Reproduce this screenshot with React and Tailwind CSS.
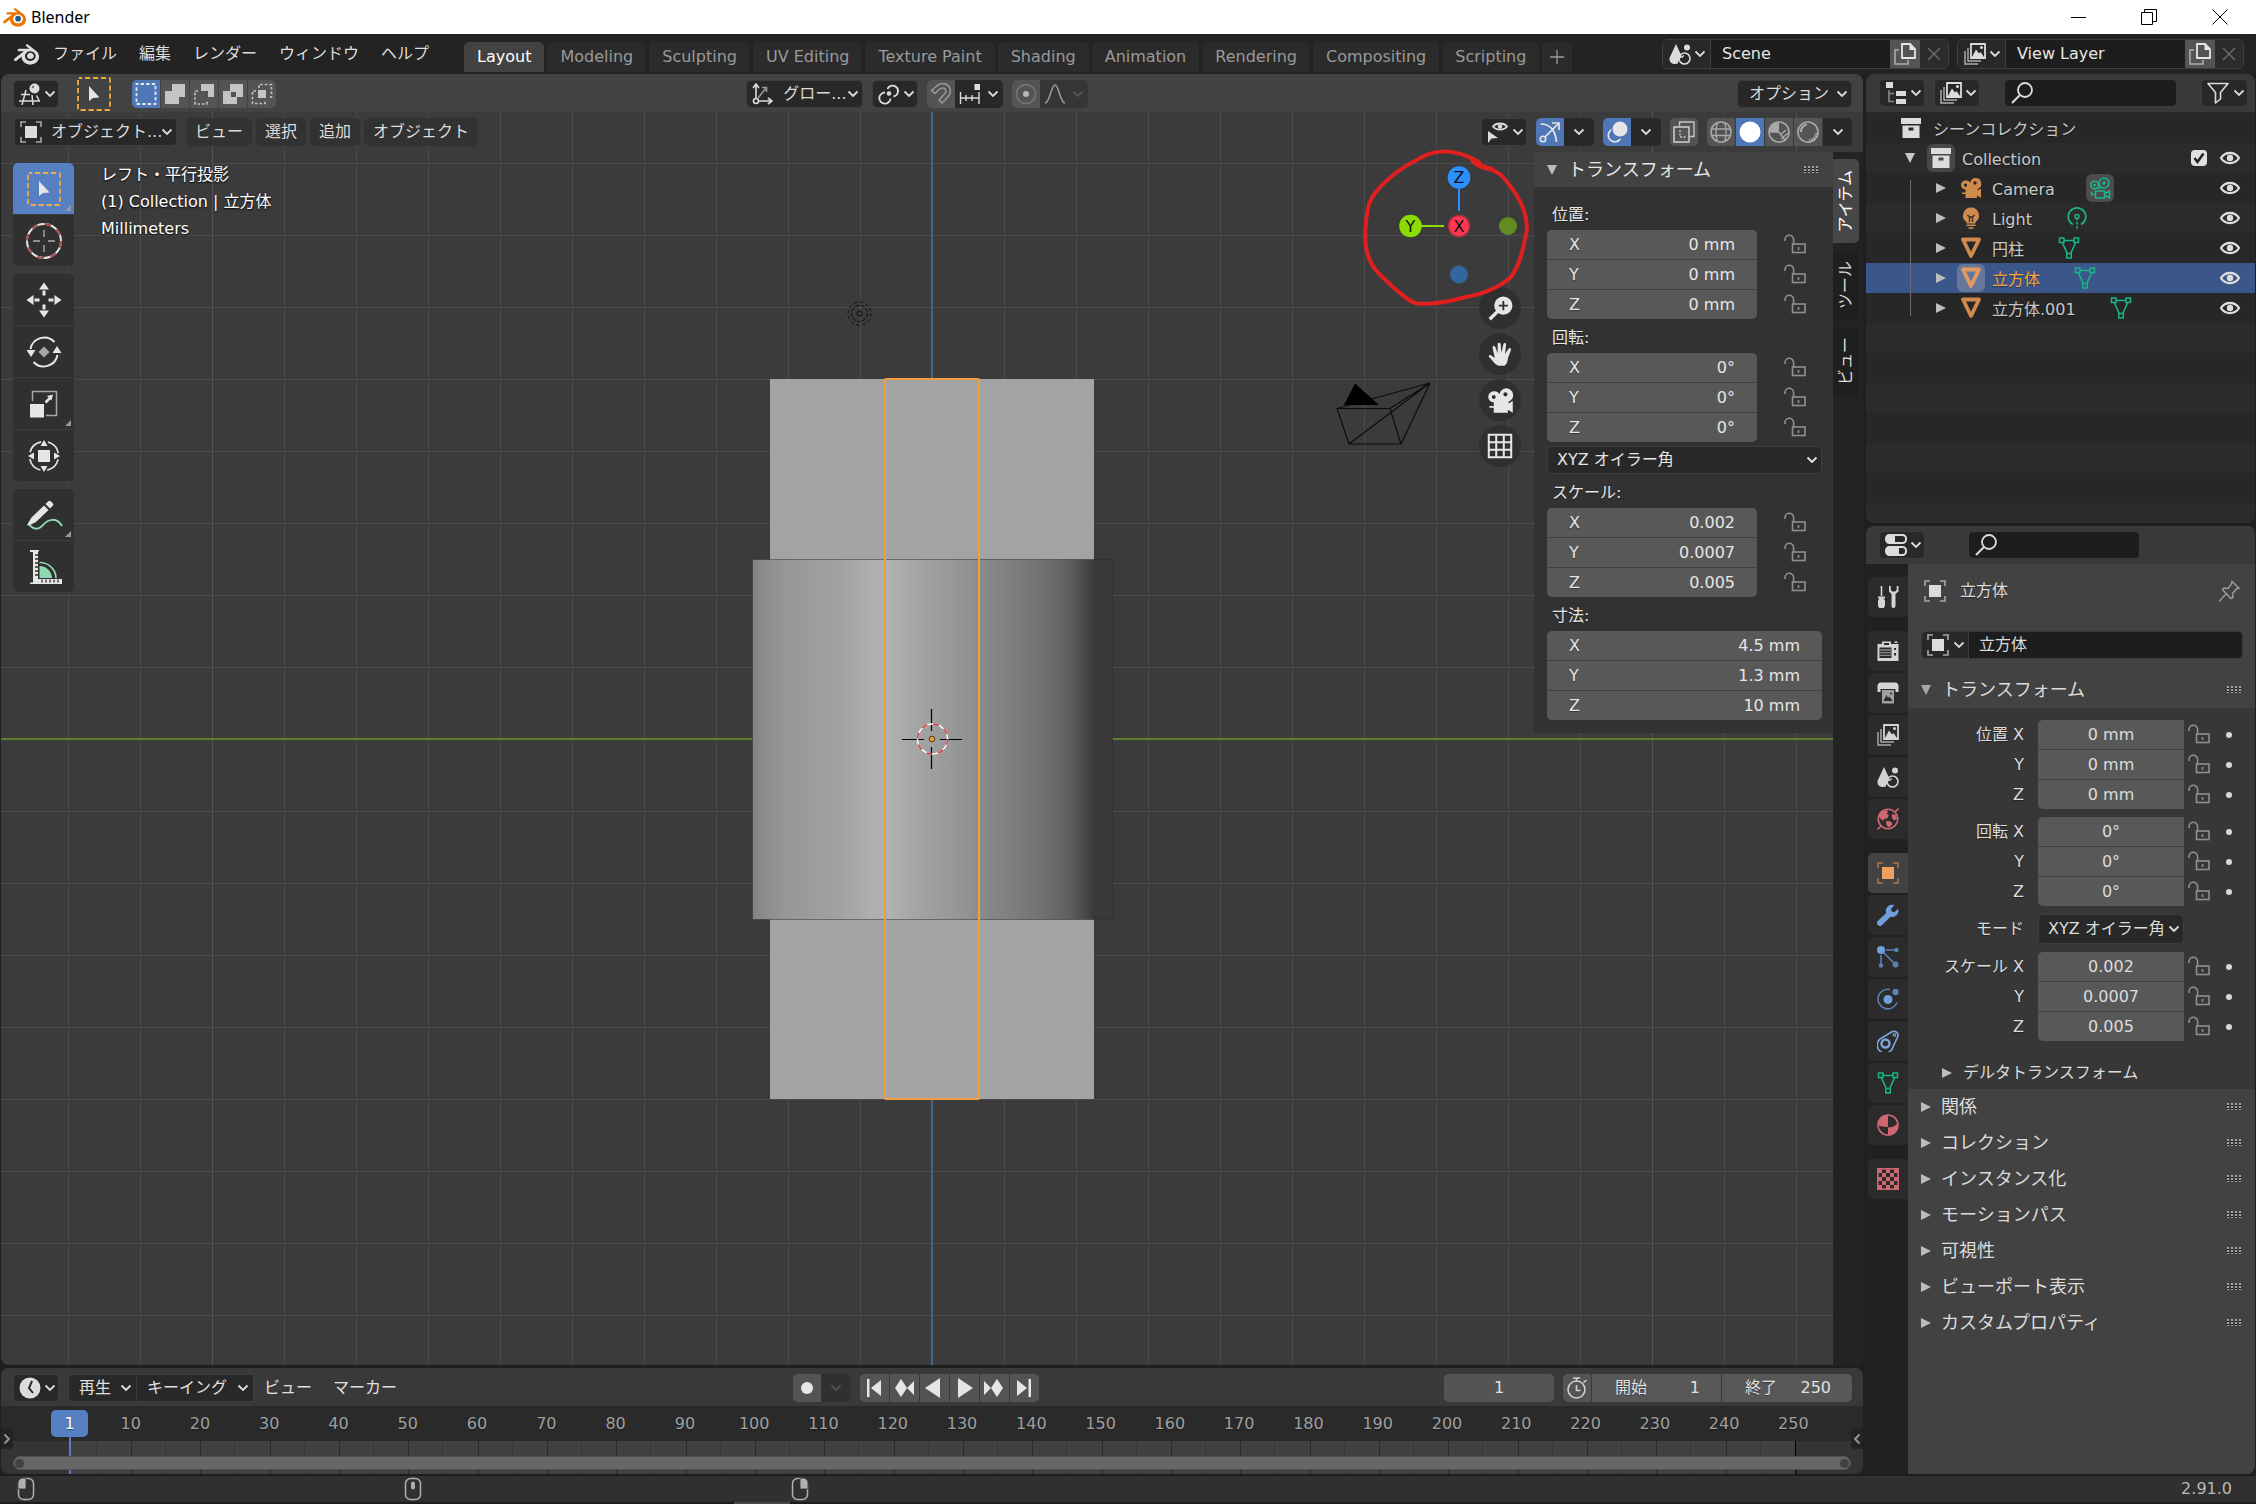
import { SiBlender } from 'react-icons/si'

const FONT = "font-['DejaVu_Sans','Noto_Sans_CJK_JP',sans-serif]"

// Every icon is drawn on a 22x22 board
function Icon({ children, className = '', size = 22 }) {
  return (
    <svg
      viewBox="0 0 22 22"
      width={size}
      height={size}
      fill="none"
      stroke="currentColor"
      strokeWidth="1.6"
      className={`shrink-0 ${className}`}
      aria-hidden="true"
    >
      {children}
    </svg>
  )
}

const solid = { fill: 'currentColor', stroke: 'none' }

function Chevron({ className = '' }) {
  return (
    <svg viewBox="0 0 12 8" width="12" height="8" fill="none" stroke="currentColor" strokeWidth="1.8" className={`shrink-0 ${className}`} aria-hidden="true">
      <path d="M1.5 1.5 6 6l4.5-4.5" />
    </svg>
  )
}

const Editor3D = () => (
  <Icon>
    <circle cx="15.5" cy="5.5" r="5" {...solid} />
    <circle cx="14" cy="4" r="1.2" fill="#777" stroke="none" />
    <path d="M2 11.5h9M0 18h21M7 7 3 22M13 12l1 10M17.5 12.5l2.5 5" strokeWidth="1.5" />
  </Icon>
)
const CursorArrow = <path d="M0 0v15l4-3 6.5-.5z" />
const SelectBox = ({ size = 34 }) => (
  <svg viewBox="0 0 34 34" width={size} height={size} fill="none" aria-hidden="true">
    <rect x="1" y="1" width="32" height="32" rx="1" stroke="#f2a93b" strokeWidth="1.8" strokeDasharray="5.2 2.8" strokeDashoffset="2" />
    <g transform="translate(12 9)" fill="#e6e6e6">{CursorArrow}</g>
  </svg>
)
const SelSet = () => <Icon><rect x="1.5" y="1" width="19" height="20" strokeDasharray="3.4 2.2" strokeDashoffset="1.5" strokeWidth="1.8" /></Icon>
const SelExtend = () => <Icon className="text-[#c4c4c4]"><path d="M8 1h13v13h-6v7H1V8h7z" {...solid} /></Icon>
const SelSubtract = () => (
  <Icon className="text-[#c4c4c4]">
    <path d="M8 1h13v13h-6V8H8z" {...solid} />
    <path d="M5 8H2v13h12v-4" strokeDasharray="2.6 2" />
  </Icon>
)
const SelInvert = () => (
  <Icon className="text-[#c4c4c4]">
    <path fillRule="evenodd" d="M8 1h13v13h-6v7H1V8h7zM9 9v5h5V9z" {...solid} />
  </Icon>
)
const SelIntersect = () => (
  <Icon className="text-[#c4c4c4]">
    <path d="M7 7h8v8H7z" {...solid} />
    <path d="M8 5V1.500h12.500V14H17M5 8H1.500v12.500H14V17" strokeDasharray="2.600 2" />
  </Icon>
)
const Orientation = () => (
  <Icon>
    <path d="M5 2v16h15M2 5l3-4 3 4M17 15l4 3-4 3" />
    <path d="M7 15 15 5M11 4.500h4.500V9" stroke="#999" />
    <circle cx="5" cy="18" r="2.500" fill="#282828" />
  </Icon>
)
const Pivot = () => (
  <Icon>
    <path d="M9.500 6a5.500 5.500 0 1 1 6 7.500M12.500 15.500A5.600 5.600 0 1 1 7 9.500" strokeWidth="1.800" />
    <circle cx="11" cy="10.500" r="2.300" {...solid} />
  </Icon>
)
const Magnet = () => (
  <Icon className="text-[#9a9a9a]">
    <path d="M1.500 7.500 5.500 4c5-5 11-4 13.500-.500 2.500 4 1.500 8-2 11.500l-5 5-3-3 5-5.500c2-2 2.500-4 1-5.500-1.500-1.500-4-1-6 .500L5 10.500z" strokeWidth="1.500" />
  </Icon>
)
const SnapGrid = () => (
  <Icon>
    <path d="M1 15h19M1.500 9v12M7 12v6M13 12v6M20 9v12" strokeWidth="1.400" />
    <path d="M15.500 1H21v6h-5.500z" {...solid} />
  </Icon>
)
const Proportional = () => (
  <Icon className="text-[#b8b8b8]">
    <circle cx="11" cy="11" r="9.500" stroke="#777" />
    <circle cx="11" cy="11" r="3" {...solid} />
  </Icon>
)
const Falloff = () => <Icon className="text-[#9a9a9a]"><path d="M1 20c5 0 6-18 10-18s5 18 10 18" /></Icon>
const VisEye = () => (
  <Icon>
    <path d="M6 5.500C9 1.500 17 1.500 20 5.500 17 9.500 9 9.500 6 5.500z" strokeWidth="1.800" />
    <circle cx="13" cy="5.500" r="2.200" {...solid} />
    <path d="M1 10v12l3.500-4.500L11 17z" {...solid} />
  </Icon>
)
const GizmoIcon = () => (
  <Icon>
    <path d="M1.500 3c10 0 15 7 16 18M5 17 19 3M13 2h7v7" strokeWidth="1.700" />
    <circle cx="4" cy="18" r="2.700" fill="#4f76b7" />
  </Icon>
)
const OverlayIcon = () => (
  <Icon>
    <circle cx="14" cy="8" r="7.500" {...solid} />
    <path d="M6 8.500a6.500 6.500 0 1 0 8.500 9" />
    <path d="M6.500 8.500a6.500 6.500 0 0 0 8 8.500" stroke="#4f76b7" strokeDasharray="2.500 1.500" />
  </Icon>
)
const XRay = () => (
  <Icon className="text-[#c8c8c8]">
    <path d="M6.500 5V1H21v14.500h-4" strokeWidth="1.400" />
    <rect x="1" y="6" width="15" height="15" strokeWidth="1.600" />
    <path d="M7 9v7h7" strokeDasharray="2 1.500" strokeWidth="1.400" />
  </Icon>
)
const Wireframe = () => (
  <Icon className="text-[#a8a8a8]">
    <circle cx="11" cy="11" r="10" />
    <path d="M7.500 1.500c-2 6-2 13 0 19M14.500 1.500c2 6 2 13 0 19M1.500 8h19M1.500 14.500h19" strokeWidth="1.300" />
  </Icon>
)
const SolidBall = () => <Icon className="text-white"><circle cx="11" cy="11" r="10.500" {...solid} /></Icon>
const MaterialBall = () => (
  <Icon className="text-[#a8a8a8]">
    <circle cx="11" cy="11" r="10" />
    <path d="M11 1v10H1A10 10 0 0 1 11 1z" {...solid} />
    <path d="M11 11 1 11M11 11l6 8M12 14l6-5M13 18l7-6" strokeWidth="1.300" />
  </Icon>
)
const RenderedBall = () => (
  <Icon className="text-[#a8a8a8]">
    <circle cx="11" cy="11" r="10" />
    <path d="M4 11a7 7 0 0 1 6-7.500" strokeWidth="2.200" />
    <path d="M12 20a9 9 0 0 0 8-9" strokeWidth="3.500" strokeDasharray="1.600 1" />
  </Icon>
)
const SceneIcon = () => (
  <Icon>
    <path d="M7 1 13 14a8 8 0 0 0-4 6.500C4 22 0 20 .500 15z" {...solid} />
    <circle cx="18" cy="4.500" r="3" {...solid} />
    <circle cx="15.500" cy="15.500" r="5.500" />
    <path d="M13 15a2.500 2.500 0 0 1 2-2.300" strokeWidth="1.200" />
  </Icon>
)
const ViewLayerIcon = () => (
  <Icon>
    <path d="M7 1h14v14H7z" strokeWidth="1.800" />
    <path d="m8 14 4-7.500 3 4 1.500-1.500L20 14z" {...solid} />
    <circle cx="17.500" cy="4.500" r="1.500" {...solid} />
    <path d="M4 5v13h13M1 8v13h13" stroke="#aaa" strokeWidth="1.500" />
  </Icon>
)
const CopyIcon = () => (
  <Icon>
    <path d="M8 1h8l5 5v9H8z" strokeWidth="1.800" />
    <path d="M15.500 1v6H21z" {...solid} />
    <path d="M5 7H1v14h13v-4" stroke="#aaa" />
  </Icon>
)
const OutlinerTree = () => (
  <Icon>
    <path d="M1 0h7v6H1zM11 9h10v5H11zM11 17h10v5H11z" {...solid} />
    <path d="M4 8v11.500h5M4 11.500h5" stroke="#888" />
  </Icon>
)
const SearchIcon = () => (
  <Icon>
    <circle cx="14" cy="8" r="7" strokeWidth="1.800" />
    <path d="m9 13-8 8" strokeWidth="2" />
  </Icon>
)
const FilterIcon = () => <Icon><path d="M1 1.500h20l-7.500 9V17l-5 4V10.500z" strokeLinejoin="round" /></Icon>
const CollectionIcon = () => (
  <Icon className="text-[#dcdcdc]">
    <path fillRule="evenodd" d="M1 1h20v6H1zM2.500 8.500h17V21h-17zM8.500 10.500v3h5v-3z" {...solid} />
  </Icon>
)
const CameraIcon = ({ size = 22 }) => (
  <Icon size={size}>
    <path fillRule="evenodd" d="M5.500 3.500a4.500 4.500 0 0 1 4.700 2.200A5.600 5.600 0 1 1 17.500 12v1.500l3.500-2V21l-4-2.500V21H5.500v-4H2v-1.600h3.500v-2.900a4.500 4.500 0 0 1 0-9zm0 3a1.600 1.600 0 1 0 0 3.200 1.600 1.600 0 0 0 0-3.200zM15 4.300a1.700 1.700 0 1 0 0 3.400 1.700 1.700 0 0 0 0-3.400z" {...solid} />
  </Icon>
)
const CameraData = () => (
  <Icon>
    <circle cx="5.500" cy="8" r="3.800" />
    <circle cx="15" cy="6" r="5" />
    <path d="M8 11h4M6.500 14h9v7h-9zM15.500 17l5-3v7l-5-3M2.500 14.500v3h3" strokeWidth="1.500" />
    <circle cx="15" cy="6" r="1" />
    <circle cx="5.500" cy="8" r=".7" />
  </Icon>
)
const BulbIcon = () => (
  <Icon>
    <path d="M11 .500a8 8 0 0 0-4.500 14.600v1.400h9v-1.400A8 8 0 0 0 11 .500z" {...solid} />
    <path d="m7.500 8 2 2h3l2-2M9.500 10v5M12.500 10v5" stroke="#2b2b2b" strokeWidth="1.300" />
    <path d="M6.500 18.300h9M8.500 21h5" strokeWidth="1.600" />
  </Icon>
)
const LightData = () => (
  <Icon>
    <path d="M7 17.500a8.800 8.800 0 1 1 8 0" />
    <circle cx="11" cy="9.500" r="2" />
    <path d="M11 11v11" strokeDasharray="2.500 1.500" />
  </Icon>
)
const MeshIcon = () => <Icon><path d="M3 2.500h16L11 19z" strokeWidth="3.800" strokeLinejoin="round" /></Icon>
const MeshData = () => (
  <Icon className="text-[#1bb489]">
    <path d="M6 3.500h10M4.500 6l5 11M17.500 6l-5 11" />
    <path d="M1.500 1H6v4.500H1.500zM16 1h4.500v4.500H16zM8.800 16.500h4.500V21H8.800z" strokeWidth="1.500" />
  </Icon>
)
const EyeIcon = () => (
  <Icon className="text-[#dcdcdc]">
    <path d="M2 11C6 4.300 16 4.300 20 11 16 17.700 6 17.700 2 11z" strokeWidth="2.300" />
    <circle cx="11" cy="11" r="3.200" {...solid} />
  </Icon>
)
const ObjectIcon = ({ frame = '#a8a8a8' }) => (
  <Icon>
    <path d="M1 6V1h5M16 1h5v5M21 16v5h-5M6 21H1v-5" stroke={frame} strokeWidth="1.600" />
    <path d="M5 5h12v12H5z" {...solid} />
  </Icon>
)
const PropsIcon = () => (
  <Icon>
    <rect x="1" y="1" width="20" height="8" rx="3.500" strokeWidth="2" />
    <rect x="1" y="13" width="20" height="8" rx="3.500" strokeWidth="2" />
    <path d="M1 5a4 4 0 0 1 4-4h5v8H5a4 4 0 0 1-4-4zM1 17a4 4 0 0 1 4-4h9v8H5a4 4 0 0 1-4-4z" {...solid} />
  </Icon>
)
const ToolsTab = () => (
  <Icon className="text-[#d4d4d4]">
    <path d="M4.500 0v10" strokeWidth="1.600" />
    <path d="M1 10.500h7v2H6.500l1.500 2V19a3.500 3.500 0 0 1-7 0v-4.500l1.500-2H1zM12 0v5.500l2.500 2.500V20a2 2 0 0 0 4 0V8L21.500 5.500V0h-1.800v4l-1.500 1.500h-3L13.800 4V0z" {...solid} />
  </Icon>
)
const RenderTab = () => (
  <Icon className="text-[#d4d4d4]">
    <path fillRule="evenodd" d="M5 4V1.500h9V4h7.500v17H.500V4zM7 3v2h5V3zM2.500 7.500V18h12V7.500zM17 8v2h2V8zm0 5v2.500h2V13zM17.500 1.500h3v1.500h-3z" {...solid} />
    <path d="M3 10h11M3 12.700h11M3 15.400h11" stroke="#888" strokeWidth="1.300" />
  </Icon>
)
const OutputTab = () => (
  <Icon className="text-[#d4d4d4]">
    <path d="M2.500.500h17L21.500 3v7h-3V7h-15v3h-3V3z" {...solid} />
    <path fillRule="evenodd" d="M5 8h12v13.500H5zm1.500 11h9l-3-4.500-1.500 1.500-1.500-3z" fill="#a0a0a0" stroke="none" />
    <circle cx="14" cy="11.500" r="1" fill="#222" stroke="none" />
  </Icon>
)
const WorldTab = () => (
  <Icon className="text-[#cd6873]">
    <circle cx="11" cy="11" r="9.800" />
    <path d="M4 4c3-2 6-2 7-1l-1 3 2 1.500-2 3-3 .500-1 2-4-4zM15 6l4 1 1 4-3 1.500-2-2.500zM9 13l5 .500 1.500 2.500-3 3.500-3-2z" {...solid} />
    <path d="m18 4 3.500-3.500M.500 21.500 4 18" />
  </Icon>
)
const WrenchTab = () => (
  <Icon className="text-[#6f9fdc]">
    <path d="M14.500.800a6 6 0 0 1 3 .200L14 4.700 14.700 7.500l2.700.800 3.700-3.500a6.200 6.200 0 0 1-7.600 8L5 21a2.900 2.900 0 0 1-4.200-4.100L9.200 9A6.200 6.200 0 0 1 14.500.800z" {...solid} />
  </Icon>
)
const ParticlesTab = () => (
  <Icon className="text-[#5a7fb2]">
    <path d="M4 4 18 18M9 4h10M4 9v10" />
    <circle cx="4" cy="4" r="4" fill="#6f9fdc" stroke="none" />
    <circle cx="19.500" cy="4" r="2.200" {...solid} />
    <circle cx="4" cy="19.500" r="2.200" {...solid} />
    <circle cx="18.500" cy="18.500" r="3" {...solid} />
  </Icon>
)
const PhysicsTab = () => (
  <Icon className="text-[#5a7fb2]">
    <path d="M13 1.500a9.800 9.800 0 1 0 7 13" />
    <circle cx="11" cy="11.500" r="4.500" fill="#6f9fdc" stroke="none" />
    <circle cx="18.500" cy="4" r="3.200" {...solid} />
  </Icon>
)
const ConstraintTab = () => (
  <Icon className="text-[#7fa6dc]">
    <path d="M3 9 15 1.800a4 4 0 0 1 5.800 4.700L16 17A8 8 0 1 1 3 9z" />
    <circle cx="8.500" cy="13.500" r="4" strokeWidth="2.400" />
    <circle cx="17.500" cy="4.800" r="1.300" strokeWidth="1.200" />
  </Icon>
)
const MaterialTab = () => (
  <Icon className="text-[#cd6873]">
    <circle cx="11" cy="11" r="10" />
    <path d="M11 1v12c-5 0-8-1-10-2A10 10 0 0 1 11 1zM11 21v-7.500c5 0 8-2.500 9.500-4A10 10 0 0 1 11 21z" {...solid} />
  </Icon>
)
const TextureTab = () => (
  <Icon className="text-[#cd6873]">
    <rect x=".8" y=".8" width="20.400" height="20.400" />
    {[0, 1, 2, 3, 4].map(r =>
      [0, 1, 2, 3, 4].filter(c => (r + c) % 2 === 0).map(c => (
        <rect key={`${r}-${c}`} x={1 + c * 4} y={1 + r * 4} width="4" height="4" {...solid} />
      ))
    )}
  </Icon>
)
const PinIcon = () => (
  <Icon className="text-[#9a9a9a]">
    <path d="m14 1.500 7 6.500-2.500 1-4 4.500.500 4L13 18.500 4.500 9.500 6 8l4 .500 3.500-4.500zM8 14l-7 7.500" strokeWidth="1.500" />
  </Icon>
)
const LockIcon = () => (
  <Icon className="text-[#8f8f8f]">
    <path d="M1 7V5.500a4.300 4.300 0 0 1 8.600 0V10" />
    <rect x="8.500" y="10" width="12.500" height="8.500" />
    <path d="M14.500 13v3" />
  </Icon>
)
const ClockIcon = () => (
  <Icon>
    <circle cx="11" cy="11" r="10.500" {...solid} />
    <path d="m13 4-3 7 4 5" stroke="#282828" strokeWidth="2" />
  </Icon>
)
const Stopwatch = () => (
  <Icon className="text-[#d0d0d0]">
    <circle cx="10.500" cy="12.500" r="8.500" />
    <path d="M10.500 8v5.500h4M7 1h7M10.500 1v3M17.500 5.500 20.500 3" />
  </Icon>
)

function Mouse({ button }) {
  return (
    <svg viewBox="0 0 18 24" width="18" height="24" fill="none" stroke="#b0b0b0" strokeWidth="1.500" aria-hidden="true">
      <rect x="1.500" y="1.500" width="15" height="21" rx="5" />
      {button === 'left' && <path d="M1 12V6a5 5 0 0 1 5-5h3v11z" fill="#b0b0b0" stroke="#303030" strokeWidth=".8" />}
      {button === 'middle' && <rect x="7" y="4.500" width="4" height="8" rx="2" fill="#b0b0b0" stroke="none" />}
      {button === 'right' && <path d="M17 12V6a5 5 0 0 0-5-5H9v11z" fill="#b0b0b0" stroke="#303030" strokeWidth=".8" />}
    </svg>
  )
}

function Grip() {
  return (
    <svg viewBox="0 0 16 8" width="16" height="8" aria-hidden="true" className="shrink-0">
      {[0, 4, 8, 12].map(x => (
        <g key={x}>
          <path d={`M${x} 0h2v2h-2zM${x} 3h2v2h-2zM${x} 6h2v1h-2z`} fill="#a4a4a4" />
          <path d={`M${x} 2h2v1h-2zM${x} 5h2v1h-2z`} fill="#1c1c1c" />
        </g>
      ))}
    </svg>
  )
}

const box = 'bg-[#282828] border border-[#3d3d3d] rounded-[5px]'

function IconMenu({ icon, label, className = 'w-[46px]' }) {
  return (
    <button aria-label={label} className={`h-7 shrink-0 ${className} ${box} flex items-center justify-between pl-[5px] pr-0.5 text-[#dcdcdc]`}>
      {icon}
      <Chevron />
    </button>
  )
}

function IconCell({ icon, label, active, className = 'w-7' }) {
  return (
    <button aria-label={label} className={`h-7 ${className} flex items-center justify-center text-[#e6e6e6] ${active ? 'bg-[#4f76b7]' : 'bg-[#545454]'}`}>
      {icon}
    </button>
  )
}

function ChevronCell({ label, className = 'w-[30px]' }) {
  return (
    <button aria-label={label} className={`h-7 ${className} bg-[#282828] flex items-center justify-center text-[#dcdcdc]`}>
      <Chevron />
    </button>
  )
}

const tabs = ['Layout', 'Modeling', 'Sculpting', 'UV Editing', 'Texture Paint', 'Shading', 'Animation', 'Rendering', 'Compositing', 'Scripting', '+']

function DataBlock({ icon, value, label }) {
  return (
    <div className="h-[30px] w-[287px] flex rounded-[5px] border border-[#3f3f3f] overflow-hidden">
      <button aria-label={`${label} list`} className="w-[47px] bg-[#282828] flex items-center justify-between pl-1.5 pr-1 text-[#dcdcdc]">
        {icon}
        <Chevron />
      </button>
      <input aria-label={label} defaultValue={value} className="flex-1 min-w-0 bg-[#1d1d1d] border-l border-[#3f3f3f] px-[11px] text-[#e6e6e6] outline-none" />
      <button aria-label={`New ${label}`} className="w-[30px] bg-[#545454] flex items-center justify-center text-[#e6e6e6]"><CopyIcon /></button>
      <button aria-label={`Remove ${label}`} className="w-7 bg-[#2b2b2b] flex items-center justify-center text-[#666]">
        <Icon><path d="m5 5 12 12M17 5 5 17" /></Icon>
      </button>
    </div>
  )
}

function TitleBar() {
  return (
    <header className="h-[34px] shrink-0 bg-white flex items-center pl-[3px] text-black">
      <span className="relative text-[#ea7600]">
        <SiBlender size={23} />
        <svg viewBox="0 0 24 24" width="23" height="23" className="absolute inset-0" aria-hidden="true">
          <circle cx="15.750" cy="13.300" r="4" fill="#fff" />
          <circle cx="15.750" cy="13.300" r="3" fill="#265787" />
        </svg>
      </span>
      <h1 className="ml-[5px] font-['Noto_Sans',sans-serif] text-base leading-none">Blender</h1>
      <div className="ml-auto flex h-full">
        <button aria-label="Minimize" className="w-[70px] flex items-center justify-center">
          <svg width="16" height="16" stroke="#000" aria-hidden="true"><path d="M0 8.500h15" /></svg>
        </button>
        <button aria-label="Restore" className="w-[70px] flex items-center justify-center">
          <svg width="16" height="16" stroke="#000" fill="none" aria-hidden="true"><path d="M.5 3.500h11v12H.5zM3.500 3.500v-3h12v12h-4" /></svg>
        </button>
        <button aria-label="Close" className="w-[72px] flex items-center justify-center">
          <svg width="16" height="16" stroke="#000" aria-hidden="true"><path d="m.5.5 15 15M15.500.5l-15 15" /></svg>
        </button>
      </div>
    </header>
  )
}

function TopBar() {
  return (
    <nav className="h-10 shrink-0 bg-[#232323] flex items-center pl-[14px] pr-3 text-[#dcdcdc]">
      <button aria-label="Blender" className="w-7 flex"><SiBlender size={25} /></button>
      {['ファイル', '編集', 'レンダー', 'ウィンドウ', 'ヘルプ'].map(m => (
        <button key={m} className="px-[11px] whitespace-nowrap">{m}</button>
      ))}
      <div className="ml-6 flex gap-[3px] self-end mb-0.5">
        {tabs.map((t, i) => (
          <button
            key={t}
            className={`h-[30px] rounded-t-[5px] whitespace-nowrap ${t === '+' ? 'px-2 text-[#9a9a9a]' : 'px-[13px]'} ${i === 0 ? 'bg-[#424242] text-white' : 'bg-[#2b2b2b] text-[#9a9a9a]'}`}
          >
            {t === '+' ? <Icon size={14}><path d="M11 0v22M0 11h22" strokeWidth="2" /></Icon> : t}
          </button>
        ))}
      </div>
      <div className="ml-auto flex gap-2">
        <DataBlock icon={<SceneIcon />} value="Scene" label="Scene" />
        <DataBlock icon={<ViewLayerIcon />} value="View Layer" label="View Layer" />
      </div>
    </nav>
  )
}

function ToolHeader() {
  return (
    <div className="h-[38px] shrink-0 grid grid-cols-[24fr_auto_25fr] items-center bg-[#424242] rounded-t-lg pl-3 pr-[11px] pt-0.5">
      <div className="flex items-center">
        <IconMenu icon={<Editor3D />} label="Editor type" />
        <button aria-label="Active tool" className="ml-[18px] mr-[21px]"><SelectBox /></button>
        <div className="flex gap-px rounded-[5px] overflow-hidden">
          <IconCell icon={<SelSet />} label="Set selection" active />
          <IconCell icon={<SelExtend />} label="Extend selection" />
          <IconCell icon={<SelSubtract />} label="Subtract selection" />
          <IconCell icon={<SelInvert />} label="Invert selection" />
          <IconCell icon={<SelIntersect />} label="Intersect selection" />
        </div>
      </div>
      <div className="flex items-center gap-[9px]">
        <div className={`relative h-7 w-[117px] ${box} flex items-center pl-1 text-[#dcdcdc]`}>
          <Orientation />
          <select aria-label="Transform orientation" className="absolute inset-0 w-full appearance-none bg-transparent pl-9 outline-none">
            <option>グロー...</option>
          </select>
          <Chevron className="absolute right-[3px]" />
        </div>
        <IconMenu icon={<Pivot />} label="Pivot point" />
        <div className="flex rounded-[5px] overflow-hidden">
          <IconCell icon={<Magnet />} label="Snap" />
          <button aria-label="Snap to" className="h-7 w-12 bg-[#282828] flex items-center justify-between px-1 text-[#dcdcdc]"><SnapGrid /><Chevron /></button>
        </div>
        <div className="flex rounded-[5px] overflow-hidden">
          <IconCell icon={<Proportional />} label="Proportional editing" />
          <button aria-label="Falloff" className="h-7 w-12 bg-[#363636] flex items-center justify-between px-1 text-[#555]"><Falloff /><Chevron /></button>
        </div>
      </div>
      <button className={`justify-self-end h-7 w-[115px] ${box} flex items-center justify-between pl-[11px] pr-[3px] text-[#dcdcdc] whitespace-nowrap`}>
        オプション
        <Chevron />
      </button>
    </div>
  )
}

function ViewHeader() {
  return (
    <div className="h-10 shrink-0 flex items-center pl-[13px] pr-[11px] text-[#dcdcdc]">
      <div className={`relative h-7 w-[163px] ${box} flex items-center pl-[5px]`}>
        <ObjectIcon />
        <select aria-label="Object mode" className="absolute inset-0 w-full appearance-none bg-transparent pl-9 outline-none">
          <option>オブジェクト...</option>
        </select>
        <Chevron className="absolute right-[3px]" />
      </div>
      <div className="ml-[9px] flex gap-1">
        {['ビュー', '選択', '追加', 'オブジェクト'].map(m => (
          <button key={m} className="h-7 px-[9px] rounded-[5px] bg-[#323232]/90 whitespace-nowrap">{m}</button>
        ))}
      </div>
      <div className="ml-auto flex gap-[9px]">
        <IconMenu icon={<VisEye />} label="Object types visibility" />
        <div className="flex rounded-[5px] overflow-hidden">
          <IconCell icon={<GizmoIcon />} label="Show gizmo" active />
          <ChevronCell label="Gizmo options" />
        </div>
        <div className="flex rounded-[5px] overflow-hidden">
          <IconCell icon={<OverlayIcon />} label="Show overlays" active />
          <ChevronCell label="Overlay options" />
        </div>
        <div className="rounded-[5px] overflow-hidden"><IconCell icon={<XRay />} label="Toggle X-ray" /></div>
        <div className="flex gap-px rounded-[5px] overflow-hidden">
          <IconCell icon={<Wireframe />} label="Wireframe" />
          <IconCell icon={<SolidBall />} label="Solid" active />
          <IconCell icon={<MaterialBall />} label="Material preview" />
          <IconCell icon={<RenderedBall />} label="Rendered" />
          <ChevronCell label="Shading options" className="w-[29px]" />
        </div>
      </div>
    </div>
  )
}

const gridX = Array.from({ length: 26 }, (_, i) => 68 + i * 72)
const gridY = Array.from({ length: 17 }, (_, i) => 163 + i * 72)
const shade = [
  [0, '#808281'], [3, '#8a8c8b'], [9, '#949795'], [24, '#a0a3a1'], [33, '#adafb0'], [38, '#b0b1b2'], [44, '#a6a8a7'],
  [52, '#9a9d9c'], [61, '#8f9191'], [65, '#868889'], [73, '#7c7d7f'], [81, '#6f7072'], [87, '#626264'], [91, '#525053'],
  [95, '#3b383a'], [100, '#3a3839'],
]

function Scene3D() {
  return (
    <svg viewBox="1 112 1862 1253" preserveAspectRatio="xMidYMid slice" className="absolute inset-0 w-full h-full" fill="none" aria-hidden="true">
      <defs>
        <linearGradient id="cyl">
          {shade.map(([o, c]) => <stop key={o} offset={`${o}%`} stopColor={c} />)}
        </linearGradient>
      </defs>
      <g shapeRendering="crispEdges">
        {gridX.map(x => <path key={x} d={`M${x + 0.5} 112V1365`} stroke={(x - 212) % 720 === 0 ? '#555555' : '#4a4a4a'} />)}
        {gridY.map(y => <path key={y} d={`M0 ${y + 0.5}H1863`} stroke="#4a4a4a" />)}
        <path d="M0 739H1863" stroke="#5f7f2d" strokeWidth="2" />
        <path d="M932 112V1365" stroke="#3f668a" strokeWidth="2" />
      </g>
      <rect x="770" y="379" width="324" height="720" fill="#a1a3a4" />
      <rect x="752.500" y="559.500" width="360" height="360" fill="url(#cyl)" stroke="#2e2e2e" strokeOpacity=".5" />
      <rect x="885" y="379" width="94" height="720" rx="1" stroke="#f49c3e" strokeWidth="2" />

      {/* 3D cursor and origin */}
      <path d="M902 739.500h22M940 739.500h22M931.500 709v22M931.500 747v22" stroke="#000" strokeWidth="1.200" />
      <circle cx="932.500" cy="739" r="15" stroke="#fff" strokeWidth="1.400" />
      <circle cx="932.500" cy="739" r="15" stroke="#e0303c" strokeWidth="1.400" strokeDasharray="5.900 5.900" />
      <circle cx="932" cy="739" r="2.800" fill="#f49c2c" stroke="#4a3a20" />

      {/* lamp */}
      <g stroke="#0c0c0c">
        <circle cx="859.500" cy="313.500" r="11.500" strokeDasharray="3 3" />
        <circle cx="859.500" cy="313.500" r="8" strokeDasharray="4 1.500" />
        <circle cx="859.500" cy="313.500" r="2.500" />
      </g>

      {/* camera */}
      <path d="M1337 408.500h53l11 35.500h-52zM1430 383l-93 25.500M1430 383l-40 25.500M1430 383l-29 61M1430 383l-81 61" stroke="#0c0c0c" strokeWidth="1.200" />
      <path d="M1355 383.500 1379 405h-35z" fill="#000" />
    </svg>
  )
}

const tri = 'absolute right-[3px] bottom-[3px] border-l-[6px] border-l-transparent border-b-[6px] border-b-[#9a9a9a]'

function Tool({ label, active, more, children }) {
  return (
    <button aria-label={label} className={`relative h-[51px] w-[61px] flex items-center justify-center ${active ? 'bg-[#5680c2]' : 'bg-[#303030]'}`}>
      {children}
      {more && <span className={tri} />}
    </button>
  )
}

function ToolSvg({ children }) {
  return <svg viewBox="0 0 38 38" width="38" height="38" fill="none" stroke="#e6e6e6" strokeWidth="2" aria-hidden="true">{children}</svg>
}

const white = { fill: '#e6e6e6', stroke: 'none' }

function Toolbar() {
  return (
    <div className="pt-[11px] pl-3 flex flex-col gap-2">
      <div className="flex flex-col gap-px rounded-[5px] overflow-hidden">
        <Tool label="Select box" active more><SelectBox /></Tool>
        <Tool label="Cursor">
          <ToolSvg>
            <circle cx="19" cy="19" r="17" />
            <circle cx="19" cy="19" r="17" stroke="#a8474b" strokeDasharray="6.680 6.680" />
            <path d="M19 8v7M19 23v7M8 19h7M23 19h7" stroke="#b0b0b0" strokeWidth="1.300" />
          </ToolSvg>
        </Tool>
      </div>
      <div className="flex flex-col gap-px rounded-[5px] overflow-hidden">
        <Tool label="Move">
          <ToolSvg>
            <path d="m19 1.500 5 7H14zM19 36.500l5-7H14zM1.500 19l7-5v10zM36.500 19l-7-5v10z" {...white} />
            <path d="M19 9.500v5M19 23.500v5M9.500 19h5M23.500 19h5" strokeWidth="3" />
          </ToolSvg>
        </Tool>
        <Tool label="Rotate">
          <ToolSvg>
            <path d="M5.500 16a14 14 0 0 1 24-7M32.500 22a14 14 0 0 1-24 7" />
            <path d="M1.500 17h9l-4.500 7zM27.500 20h9L32 13z" {...white} />
            <path d="m19 13.500 5.500 5.500-5.500 5.500-5.500-5.500z" fill="#a8a8a8" stroke="none" />
          </ToolSvg>
        </Tool>
        <Tool label="Scale" more>
          <ToolSvg>
            <path d="M7.500 16V6.500h24v24H21" stroke="#a8a8a8" strokeWidth="1.500" />
            <path d="M5 19h14v13.500H5z" {...white} />
            <path d="m20.500 17.500 5-5" strokeWidth="2.500" />
            <path d="m28 9.500-1.500 6-4.500-4.500z" {...white} />
          </ToolSvg>
        </Tool>
        <Tool label="Transform">
          <ToolSvg>
            <circle cx="19" cy="19" r="14.500" strokeWidth="1.700" strokeDasharray="15.800 7" strokeDashoffset="-3.500" />
            <path d="M13 13h12v12H13zM19 3l3.500 6h-7zM19 35l3.500-6h-7zM3 19l6-3.500v7zM35 19l-6-3.500v7z" {...white} />
          </ToolSvg>
        </Tool>
      </div>
      <div className="flex flex-col gap-px rounded-[5px] overflow-hidden">
        <Tool label="Annotate" more>
          <ToolSvg>
            <path d="M4 28c4 6 10 6 14 1 5-6 14-8 19 1" stroke="#90d8b0" />
            <path d="M6.500 21.500 19 9.500l4.500 4.500L11 26l-7 3.500-2-.500zM20.500 8l2.500-2.500a2 2 0 0 1 3 0l1.500 1.500a2 2 0 0 1 0 3L25 12.500z" {...white} />
          </ToolSvg>
        </Tool>
        <Tool label="Measure">
          <ToolSvg>
            <path d="M5 2h9v1.500h-1V31h24v5H5v-1.500h3V4H5z" {...white} />
            <path d="M10 7h3M10 11h3M10 15h3M10 19h3M10 23h3M10 27h3M17 31.500v3M21 31.500v3M25 31.500v3M29 31.500v3M33 31.500v3" stroke="#303030" strokeWidth="1.300" />
            <path d="M14.500 30V18a12.500 12.500 0 0 1 12.500 12z" fill="#90d8b0" stroke="none" />
            <path d="M14.500 14.500A16 16 0 0 1 31 30" stroke="#90d8b0" strokeWidth="1.600" />
          </ToolSvg>
        </Tool>
      </div>
    </div>
  )
}

function NavGizmo() {
  return (
    <svg viewBox="1364 152 168 135" width="168" height="135" className="relative z-10 overflow-visible pointer-events-none" fill="none" aria-label="Axes" role="img">
      <path d="M1459 188v23" stroke="#2c8fff" strokeWidth="2" />
      <path d="M1421 226h23" stroke="#8bdc00" strokeWidth="2" />
      <circle cx="1459" cy="177.500" r="11.300" fill="#2c8fff" />
      <circle cx="1410.500" cy="226" r="11.300" fill="#8bdc00" />
      <circle cx="1459" cy="226" r="10.500" fill="#ff3653" stroke="#ab3344" strokeWidth="1.500" />
      <circle cx="1508" cy="226" r="9" fill="#628b22" />
      <circle cx="1459" cy="274.500" r="9" fill="#33659f" />
      <g fill="#101010" textAnchor="middle" className={`text-base [text-shadow:none] ${FONT}`}>
        <text x="1459" y="183">Z</text>
        <text x="1410.500" y="232">Y</text>
        <text x="1459" y="232">X</text>
      </g>
      <path
        d="M1479 162C1470 157 1458 151 1445 151.500 1432 151 1424 156 1413 162 1396 171 1374 189 1369 204 1365 220 1364 240 1367 252 1371 268 1380 275 1392 286 1400 293 1410 303 1418 303.500 1432 305 1448 302 1466 297 1482 294 1499 288 1511 277 1521 263 1523 248 1527 230 1527 210 1518 194 1502 176 1496 170 1488 169 1473 161"
        stroke="#e01f1f"
        strokeWidth="4"
        strokeLinecap="round"
        strokeLinejoin="round"
      />
      <path d="M1473 161c5 5 12 7 18 8" stroke="#e01f1f" strokeWidth="5" strokeLinecap="round" />
    </svg>
  )
}

function NavButton({ label, children }) {
  return <button aria-label={label} className="size-[42px] rounded-full bg-[#2f2f2f]/90 flex items-center justify-center text-[#e6e6e6]">{children}</button>
}

function AxisFields({ group, values, wide }) {
  return (
    <div className="flex">
      <div className={`flex flex-col gap-px rounded-[5px] overflow-hidden bg-[#424242] ${wide ? 'flex-1' : 'w-[210px]'}`}>
        {['X', 'Y', 'Z'].map((a, i) => (
          <label key={a} className="h-[29px] flex items-center bg-[#585858] pl-[22px] pr-[22px]">
            {a}
            <input aria-label={`${group} ${a}`} defaultValue={values[i]} className="flex-1 min-w-0 bg-transparent text-right outline-none" />
          </label>
        ))}
      </div>
      {!wide && (
        <div className="ml-[27px] flex flex-col gap-px">
          {['X', 'Y', 'Z'].map(a => (
            <button key={a} aria-label={`Lock ${group} ${a}`} className="h-[29px] flex items-center"><LockIcon /></button>
          ))}
        </div>
      )}
    </div>
  )
}

function EulerSelect({ className, pad, id, label }) {
  return (
    <div className={`relative ${box} flex items-center ${className}`}>
      <select id={id} aria-label={label} className={`absolute inset-0 w-full appearance-none bg-transparent outline-none ${pad}`}>
        <option>XYZ オイラー角</option>
      </select>
      <Chevron className="absolute right-[3px]" />
    </div>
  )
}

function NPanel() {
  const lab = 'h-[34px] flex items-center pl-[5px] pt-[3px]'
  return (
    <section className="w-[299px] self-start bg-[#323232] text-[#e6e6e6]">
      <button className="w-full h-[35px] bg-[#424242] flex items-center pl-[13px] pr-[13px] text-lg">
        <svg width="10" height="10" fill="#bdbdbd" aria-hidden="true"><path d="M0 0h10L5 10z" /></svg>
        <span className="ml-[11px]">トランスフォーム</span>
        <span className="ml-auto"><Grip /></span>
      </button>
      <div className="pt-[9px] pb-[13px] pl-[13px] pr-[11px]">
        <div className={lab}>位置:</div>
        <AxisFields group="位置" values={['0 mm', '0 mm', '0 mm']} />
        <div className={lab}>回転:</div>
        <AxisFields group="回転" values={['0°', '0°', '0°']} />
        <EulerSelect className="mt-1 h-7" pad="pl-[9px]" label="回転モード" />
        <div className={lab}>スケール:</div>
        <AxisFields group="スケール" values={['0.002', '0.0007', '0.005']} />
        <div className={lab}>寸法:</div>
        <AxisFields group="寸法" values={['4.5 mm', '1.3 mm', '10 mm']} wide />
      </div>
    </section>
  )
}

function Viewport() {
  return (
    <section className="relative flex-1 min-h-0 flex flex-col bg-[#3b3b3b] rounded-b-lg overflow-hidden">
      <Scene3D />
      <div className="relative flex-1 flex flex-col">
        <ViewHeader />
        <div className="flex-1 flex">
          <Toolbar />
          <div className="pt-[9px] pl-[27px] leading-[27px] text-white [text-shadow:0_1px_2px_#000]">
            <p>レフト・平行投影</p>
            <p>(1) Collection | 立方体</p>
            <p>Millimeters</p>
          </div>
          <div className="ml-auto mr-0.5 flex flex-col items-end">
            <NavGizmo />
            <div className="pr-[11px] flex flex-col gap-1">
              <NavButton label="Zoom">
                <Icon size={25}>
                  <circle cx="13.500" cy="8.500" r="8" {...solid} />
                  <path d="m8.500 13.500-7 7" strokeWidth="3" />
                  <path d="M13.500 4.500v8M9.500 8.500h8" stroke="#2f2f2f" />
                </Icon>
              </NavButton>
              <NavButton label="Pan">
                <Icon size={25}>
                  <path d="M9 21C5 19 4 16 1 13.500c-1-1.500.500-2.500 1.800-1.700L6 14 4 5c0-1.700 2-1.900 2.500-.300L8.500 10V2c0-1.800 2.500-1.800 2.700 0l.500 7.500L13.500 2c.500-1.600 2.600-1.200 2.400.500L15 10.500l3-4.500c1-1.300 2.700-.400 2.200 1l-2.700 7.500c-.500 3.500-1 5-3 6.500z" {...solid} />
                </Icon>
              </NavButton>
              <NavButton label="Camera view"><CameraIcon size={27} /></NavButton>
              <NavButton label="Perspective">
                <Icon size={26}><path d="M1.500 1.500h19v19h-19zM7.800 1.500v19M14.200 1.500v19M1.500 7.800h19M1.500 14.200h19" strokeWidth="1.700" /></Icon>
              </NavButton>
            </div>
          </div>
          <NPanel />
          <div className="w-[30px] bg-[#232323] pt-[7px] flex flex-col gap-2">
            {['アイテム', 'ツール', 'ビュー'].map((t, i) => (
              <button
                key={t}
                className={`w-[26px] flex items-center justify-center rounded-r-[5px] [writing-mode:vertical-rl] ${i === 0 ? 'bg-[#474747] h-[84px] text-white' : 'bg-[#1f1f1f] h-[68px] text-[#dcdcdc]'}`}
              >
                <span className="[text-orientation:sideways] rotate-180 leading-none">{t}</span>
              </button>
            ))}
          </div>
        </div>
      </div>
    </section>
  )
}

const frames = Array.from({ length: 25 }, (_, i) => (i + 1) * 10)

const playback = [
  ['Jump to start', 'M4 2v18h2.500V2zM18 3v16L8 11z'],
  ['Previous keyframe', 'M8 2 14 11 8 20 2 11zM21 4v14l-7-7z'],
  ['Play reverse', 'M17 1v20L2 11z'],
  ['Play', 'M5 1v20l15-10z'],
  ['Next keyframe', 'M14 2 8 11l6 9 6-9zM1 4v14l7-7z'],
  ['Jump to end', 'M18 2v18h-2.500V2zM4 3v16l10-8z'],
]

function Timeline() {
  return (
    <section className="relative h-[106px] shrink-0 flex flex-col rounded-lg overflow-hidden bg-[#343434]">
      <div className="h-[38px] pt-px flex items-center justify-between bg-[#393939] pl-3 pr-[11px] text-[#e0e0e0]">
        <div className="flex items-center">
          <IconMenu icon={<ClockIcon />} label="Timeline editor" />
          <div className="ml-[9px] h-7 flex border border-[#3d3d3d] bg-[#282828] rounded-l-[5px]">
            <button className="w-[67px] flex items-center justify-between pl-2.5 pr-1">再生<Chevron /></button>
            <button className="w-[117px] flex items-center justify-between pl-2.5 pr-1 border-l border-[#3d3d3d] whitespace-nowrap">キーイング<Chevron /></button>
          </div>
          <button className="ml-2.5">ビュー</button>
          <button className="ml-[21px]">マーカー</button>
        </div>
        <div className="mr-2.5 flex items-center gap-[9px]">
          <div className="flex rounded-[5px] overflow-hidden">
            <IconCell icon={<Icon><circle cx="11" cy="11" r="6" {...solid} /></Icon>} label="Auto keying" />
            <button aria-label="Keying options" className="h-7 w-[30px] bg-[#303030] text-[#555] flex items-center justify-center"><Chevron /></button>
          </div>
          <div className="flex gap-px rounded-[5px] overflow-hidden">
            {playback.map(([label, d]) => (
              <IconCell key={label} label={label} className="w-[29px]" icon={<Icon><path d={d} {...solid} /></Icon>} />
            ))}
          </div>
        </div>
        <div className="flex items-center gap-[9px]">
          <input aria-label="Current frame" defaultValue="1" className="h-7 w-[110px] rounded-[5px] bg-[#545454] text-center outline-none" />
          <div className="h-7 flex gap-px rounded-[5px] overflow-hidden">
            <IconCell icon={<Stopwatch />} label="Preview range" />
            <label className="w-[129px] flex items-center bg-[#585858] pl-[23px] pr-[21px]">
              <span className="shrink-0">開始</span>
              <input defaultValue="1" className="flex-1 min-w-0 bg-transparent text-right outline-none" />
            </label>
            <label className="w-[130px] flex items-center bg-[#585858] pl-[23px] pr-[21px]">
              <span className="shrink-0">終了</span>
              <input defaultValue="250" className="flex-1 min-w-0 bg-transparent text-right outline-none" />
            </label>
          </div>
        </div>
      </div>

      <div className="h-[35px] bg-[#2a2a2a] flex items-center pl-[95px] pr-[35px] text-[#a0a0a0]">
        {frames.map(f => <span key={f} className="flex-1 text-center">{f}</span>)}
      </div>

      <div className="flex-1 flex">
        <div className="w-[68px]" />
        <div className="w-[62px] flex bg-[#414141]">
          <span className="w-7 border-r border-[#383838]" />
        </div>
        {frames.slice(1).map(f => (
          <div key={f} className="flex-1 flex bg-[#414141] border-l border-[#2a2a2a]">
            <span className="w-1/2 border-r border-[#383838]" />
          </div>
        ))}
        <div className="w-[68px] border-l border-black" />
      </div>

      {/* playhead */}
      <div className="absolute left-[50px] top-[42px] bottom-0 w-[37px] flex flex-col items-center">
        <span className="w-full h-[27px] rounded-[5px] bg-[#5680c2] text-white flex items-center justify-center">1</span>
        <span className="flex-1 w-0.5 bg-[#5680c2]" />
      </div>

      {/* scroll bar */}
      <div className="absolute left-3 right-[12px] bottom-1 h-[14px] rounded-full bg-[#666] border border-[#505050] flex items-center justify-between px-px">
        <span className="size-[9px] rounded-full bg-[#414141]" />
        <span className="size-[9px] rounded-full bg-[#414141]" />
      </div>

      <button aria-label="Show channels" className="absolute left-0 top-[60px] w-3 h-[21px] bg-[#232323] rounded-r flex items-center justify-center text-[#9a9a9a]">
        <Chevron className="-rotate-90" />
      </button>
      <button aria-label="Show sidebar" className="absolute right-0 top-[60px] w-3 h-[21px] bg-[#232323] rounded-l flex items-center justify-center text-[#9a9a9a]">
        <Chevron className="rotate-90" />
      </button>
    </section>
  )
}

const objects = [
  { name: 'Camera', icon: <CameraIcon />, data: <CameraData />, boxed: true },
  { name: 'Light', icon: <BulbIcon />, data: <LightData /> },
  { name: '円柱', icon: <MeshIcon />, data: <MeshData /> },
  { name: '立方体', icon: <MeshIcon />, data: <MeshData />, selected: true },
  { name: '立方体.001', icon: <MeshIcon />, data: <MeshData /> },
]

function RightTri() {
  return <svg width="10" height="10" fill="#bdbdbd" className="shrink-0" aria-hidden="true"><path d="M0 0v10l10-5z" /></svg>
}

function Outliner() {
  return (
    <section className="h-[449px] shrink-0 flex flex-col rounded-lg overflow-hidden bg-[#282828] text-[#c8c8c8]">
      <div className="h-[38px] shrink-0 flex items-center bg-[#393939] pl-[13px] pr-[7px]">
        <IconMenu icon={<OutlinerTree />} label="Outliner editor" />
        <IconMenu icon={<ViewLayerIcon />} label="Display mode" className="ml-[9px] w-[46px]" />
        <label className="mx-6 flex-1 min-w-0 h-7 flex items-center rounded-[5px] bg-[#1d1d1d] border border-[#3d3d3d] pl-1.5 text-[#dcdcdc]">
          <SearchIcon />
          <input aria-label="Search objects" className="flex-1 min-w-0 bg-transparent outline-none pl-2" />
        </label>
        <IconMenu icon={<FilterIcon />} label="Filter" className="w-[47px]" />
      </div>

      <ul className="relative flex-1 pt-px overflow-hidden">
        <li className="h-[30px] flex items-center pl-[34px] bg-[#272727]">
          <CollectionIcon />
          <span className="ml-[11px] pt-1">シーンコレクション</span>
        </li>
        <li className="h-[30px] flex items-center pl-[39px] pr-[14px] bg-[#2b2b2b]">
          <svg width="10" height="10" fill="#c8c8c8" aria-hidden="true"><path d="M0 0h10L5 10z" /></svg>
          <span className="ml-3 size-7 flex items-center justify-center rounded-md bg-[#484848]"><CollectionIcon /></span>
          <span className="ml-[7px] pt-1">Collection</span>
          <input type="checkbox" defaultChecked aria-label="Collection enabled" className="peer ml-auto size-4 appearance-none rounded-sm bg-[#e0e0e0]" />
          <svg viewBox="0 0 16 16" width="16" height="16" fill="none" stroke="#222" strokeWidth="2.500" className="-ml-4 pointer-events-none" aria-hidden="true"><path d="m3.500 8 3 4 6-8.500" /></svg>
          <button aria-label="Hide Collection" className="ml-3"><EyeIcon /></button>
        </li>
        {objects.map((o, i) => (
          <li key={o.name} className={`h-[30px] flex items-center pl-[70px] pr-[14px] ${o.selected ? 'bg-[#3b5689]' : i % 2 ? 'bg-[#2b2b2b]' : 'bg-[#272727]'}`}>
            <RightTri />
            <span className={`ml-[11px] size-7 flex items-center justify-center rounded-md ${o.selected ? 'bg-[#66779c] text-[#e39a62]' : 'text-[#cf8a4e]'}`}>{o.icon}</span>
            <span className={`ml-[7px] pt-1 ${o.selected ? 'text-[#f5a63c]' : ''}`}>{o.name}</span>
            <span className={`ml-[31px] size-7 flex items-center justify-center rounded-md text-[#1bb489] ${o.boxed ? 'bg-[#4c4c4c]' : ''}`}>{o.data}</span>
            <button aria-label={`Hide ${o.name}`} className="ml-auto"><EyeIcon /></button>
          </li>
        ))}
        {Array.from({ length: 8 }, (_, i) => (
          <li key={i} aria-hidden="true" className={`h-[30px] ${i % 2 ? 'bg-[#272727]' : 'bg-[#2b2b2b]'}`} />
        ))}
        <li aria-hidden="true" className="absolute left-11 top-[68px] h-[136px] w-px bg-[#6a6a6a]" />
      </ul>
    </section>
  )
}

const propTabs = [
  [['Tool', <ToolsTab />]],
  [['Render', <RenderTab />], ['Output', <OutputTab />], ['View Layer', <ViewLayerIcon />], ['Scene', <SceneIcon />], ['World', <WorldTab />]],
  [
    ['Object', <ObjectIcon frame="#a9744c" />],
    ['Modifiers', <WrenchTab />],
    ['Particles', <ParticlesTab />],
    ['Physics', <PhysicsTab />],
    ['Constraints', <ConstraintTab />],
    ['Data', <MeshData />],
    ['Material', <MaterialTab />],
  ],
  [['Texture', <TextureTab />]],
]

const Dot = () => <span className="size-1.5 rounded-full bg-[#d8d8d8]" />

function PropGroup({ name, id, values }) {
  return (
    <div className="flex">
      <div className="w-[116px] flex flex-col gap-px text-right">
        {['X', 'Y', 'Z'].map((a, i) => (
          <label key={a} htmlFor={`${id}${a}`} className="h-[29px] leading-[29px] whitespace-nowrap">{i === 0 ? `${name} X` : a}</label>
        ))}
      </div>
      <div className="ml-[14px] w-[146px] flex flex-col gap-px rounded-l-[5px] overflow-hidden bg-[#424242]">
        {['X', 'Y', 'Z'].map((a, i) => (
          <input key={a} id={`${id}${a}`} defaultValue={values[i]} className="h-[29px] w-full bg-[#585858] text-center outline-none" />
        ))}
      </div>
      <div className="ml-1 flex flex-col gap-px">
        {['X', 'Y', 'Z'].map(a => (
          <div key={a} className="h-[29px] flex items-center gap-4">
            <button aria-label={`Lock ${name} ${a}`}><LockIcon /></button>
            <Dot />
          </div>
        ))}
      </div>
    </div>
  )
}

function Properties() {
  return (
    <section className="flex-1 min-h-0 flex flex-col rounded-lg overflow-hidden bg-[#424242] text-[#dcdcdc]">
      <div className="h-[38px] shrink-0 flex items-center bg-[#393939] pl-[13px]">
        <IconMenu icon={<PropsIcon />} label="Properties editor" />
        <label className="ml-[43px] w-[172px] h-7 flex items-center rounded-[5px] bg-[#1d1d1d] border border-[#3d3d3d] pl-1.5">
          <SearchIcon />
          <input aria-label="Search properties" className="flex-1 min-w-0 bg-transparent outline-none pl-2" />
        </label>
      </div>
      <div className="flex-1 flex">
        <div className="w-[42px] pl-0.5 pt-[13px] bg-[#212121] flex flex-col gap-[14px]">
          {propTabs.map((group, g) => (
            <div key={g} className="flex flex-col gap-0.5">
              {group.map(([label, icon]) => (
                <button
                  key={label}
                  aria-label={label}
                  className={`h-10 flex items-center justify-center rounded-l-[5px] ${label === 'Object' ? 'bg-[#424242] text-[#f0a05c]' : 'bg-[#2b2b2b] text-[#d4d4d4]'}`}
                >
                  {icon}
                </button>
              ))}
            </div>
          ))}
        </div>

        <div className="flex-1 min-w-0">
          <div className="h-[54px] flex items-center pl-4 pr-[15px]">
            <ObjectIcon />
            <span className="ml-[14px]">立方体</span>
            <button aria-label="Pin" className="ml-auto"><PinIcon /></button>
          </div>
          <div className="mt-[13px] ml-[13px] mr-3 h-7 flex rounded-[5px] border border-[#3a3a3a] overflow-hidden">
            <button aria-label="Browse objects" className="w-[46px] bg-[#282828] flex items-center justify-between pl-[5px] pr-[3px]"><ObjectIcon /><Chevron /></button>
            <input aria-label="Object name" defaultValue="立方体" className="flex-1 min-w-0 bg-[#1d1d1d] border-l border-[#3d3d3d] px-2.5 outline-none" />
          </div>
          <button className="mt-[13px] w-full h-9 flex items-center pl-[13px] pr-[12px] text-lg">
            <svg width="10" height="10" fill="#a8a8a8" aria-hidden="true"><path d="M0 0h10L5 10z" /></svg>
            <span className="ml-[11px]">トランスフォーム</span>
            <span className="ml-auto"><Grip /></span>
          </button>

          <div className="bg-[#373737] pt-3 flex flex-col gap-2">
            <PropGroup name="位置" id="loc" values={['0 mm', '0 mm', '0 mm']} />
            <PropGroup name="回転" id="rot" values={['0°', '0°', '0°']} />
            <div className="flex items-center">
              <label htmlFor="rotmode" className="w-[116px] text-right">モード</label>
              <EulerSelect id="rotmode" className="ml-[14px] w-[146px] h-[30px]" pad="pl-[9px]" />
              <span className="ml-[42px]"><Dot /></span>
            </div>
            <PropGroup name="スケール" id="scl" values={['0.002', '0.0007', '0.005']} />
            <button className="mt-2 h-8 flex items-center pl-[34px]">
              <RightTri />
              <span className="ml-[11px]">デルタトランスフォーム</span>
            </button>
          </div>

          {['関係', 'コレクション', 'インスタンス化', 'モーションパス', '可視性', 'ビューポート表示', 'カスタムプロパティ'].map(t => (
            <button key={t} className="w-full h-9 flex items-center pl-[13px] pr-[12px] text-lg">
              <RightTri />
              <span className="ml-[10px]">{t}</span>
              <span className="ml-auto"><Grip /></span>
            </button>
          ))}
        </div>
      </div>
    </section>
  )
}

function StatusBar() {
  return (
    <footer className="h-[30px] shrink-0 bg-[#1d1d1d] pt-0.5 flex flex-col">
      <div className="flex-1 flex items-center bg-[#303030] pl-[17px] pr-6 text-[#b8b8b8]">
        <span className="w-[387px]"><Mouse button="left" /></span>
        <span className="w-[387px]"><Mouse button="middle" /></span>
        <span><Mouse button="right" /></span>
        <span className="ml-auto">2.91.0</span>
      </div>
      <div className="h-0.5 ml-[734px] w-14 bg-[#484848]" />
    </footer>
  )
}

export default function App() {
  return (
    <div className={`min-h-screen flex flex-col bg-[#1f1f1f] text-base leading-6 ${FONT}`}>
      <TitleBar />
      <TopBar />
      <main className="flex-1 flex gap-[3px] px-px [text-shadow:0_1px_1px_#0006]">
        <div className="flex-1 min-w-0 flex flex-col gap-[3px]">
          <div className="flex-1 flex flex-col">
            <ToolHeader />
            <Viewport />
          </div>
          <Timeline />
        </div>
        <aside className="w-[389px] flex flex-col gap-[3px]">
          <Outliner />
          <Properties />
        </aside>
      </main>
      <StatusBar />
    </div>
  )
}
